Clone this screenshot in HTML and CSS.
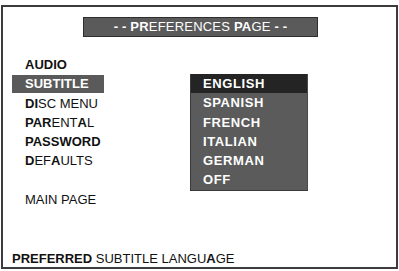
FILE: index.html
```html
<!DOCTYPE html>
<html>
<head>
<meta charset="utf-8">
<link rel="stylesheet" href="styles.css">
</head>
<body>
<div class="frame">
  <div class="title"><b>- - PR</b>EFERENCES <b>PA</b>GE <b>- -</b></div>
  <div class="main">
    <ul class="menu">
      <li class="row"><b>AUDIO</b></li>
      <li class="row active">SUBTITLE</li>
      <li class="row"><b>DI</b>SC MENU</li>
      <li class="row"><b>PAR</b>ENT<b>A</b>L</li>
      <li class="row"><b>PASSWORD</b></li>
      <li class="row"><b>D</b>EF<b>A</b>ULTS</li>
      <li class="row gap"></li>
      <li class="row">MAIN PAGE</li>
    </ul>
    <ul class="dropdown">
      <li class="opt selected">ENGLISH</li>
      <li class="opt">SPANISH</li>
      <li class="opt">FRENCH</li>
      <li class="opt">ITALIAN</li>
      <li class="opt">GERMAN</li>
      <li class="opt">OFF</li>
    </ul>
  </div>
  <div class="status"><b>PREFERRED</b> SUBTITLE LANGU<b>A</b>GE</div>
</div>
</body>
</html>
```

FILE: styles.css
```css
html, body {
  margin: 0;
  padding: 0;
  background: #ffffff;
}
body {
  width: 399px;
  height: 271px;
  overflow: hidden;
  font-family: "Liberation Sans", Arial, sans-serif;
  font-size: 13px;
  color: #111111;
}
.frame {
  box-sizing: border-box;
  margin: 5px 1px 0 1px;
  width: 397px;
  height: 264px;
  border: 2px solid #3c3c3c;
  display: flex;
  flex-direction: column;
}
.title {
  box-sizing: border-box;
  margin: 10px 0 0 80px;
  width: 235px;
  height: 20px;
  background: #5a5a5a;
  border: 1px solid #2e2e2e;
  color: #ffffff;
  text-align: center;
  line-height: 18px;
  letter-spacing: 0.2px;
}
.main {
  display: flex;
  align-items: flex-start;
  margin-top: 18px;
}
.menu, .dropdown {
  list-style: none;
  margin: 0;
  padding: 0;
}
.menu {
  margin-left: 9px;
  width: 92px;
}
.row {
  height: 19.3px;
  line-height: 19.3px;
  padding-left: 13px;
  white-space: nowrap;
}
.row.active {
  background: #5a5a5a;
  color: #ffffff;
  font-weight: bold;
  height: 18px;
  line-height: 18px;
  margin: 0.65px 0;
}
.dropdown {
  box-sizing: border-box;
  margin-left: 86px;
  margin-top: 19px;
  width: 118px;
  background: #5b5b5b;
  border-left: 1px solid #3a3a3a;
  border-bottom: 1px solid #3a3a3a;
  border-right: 1px solid #4a4a4a;
}
.opt {
  height: 19.3px;
  line-height: 19.3px;
  padding-left: 12px;
  color: #ffffff;
  font-weight: bold;
  letter-spacing: 0.6px;
}
.opt.selected {
  background: #242424;
}
.status {
  margin-top: auto;
  padding-left: 9px;
  line-height: 16px;
}
```
